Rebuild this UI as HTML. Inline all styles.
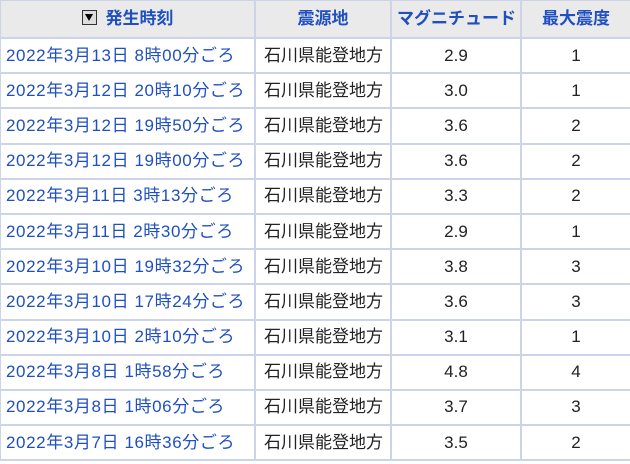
<!DOCTYPE html>
<html><head><meta charset="utf-8"><style>
body{margin:0;background:#fff;font-family:"Liberation Sans","Noto Sans CJK JP",sans-serif;font-size:17px;}
table{border-collapse:collapse;position:absolute;left:-1px;top:-1px;width:633px;table-layout:fixed;}
td,th{border:2px solid #cdd3ea;padding:0 5px;white-space:nowrap;color:#222;line-height:20px;vertical-align:middle;overflow:hidden;}
tr{height:35.2px;}
tr.h{height:38px;}
th{background:#eaeaea;color:#1f4fc0;font-weight:bold;text-align:center;}
td.d{color:#1f4fc0;text-align:left;letter-spacing:0.6px;}
td.m{padding-left:8px;}
td.c{text-align:center;}
.ic{display:inline-block;width:13px;height:13px;border:1px solid #333;background:#ddd;vertical-align:-1px;margin-right:9px;position:relative}
.ic:after{content:"";position:absolute;left:2px;top:3px;border-left:4.5px solid transparent;border-right:4.5px solid transparent;border-top:7px solid #000}
</style></head><body>
<table>
<colgroup><col style="width:255px"><col style="width:136px"><col style="width:130px"><col></colgroup>
<tr class="h"><th><span class="ic"></span>発生時刻</th><th>震源地</th><th>マグニチュード</th><th>最大震度</th></tr>
<tr><td class="d">2022年3月13日 8時00分ごろ</td><td class="m">石川県能登地方</td><td class="c">2.9</td><td class="c">1</td></tr>
<tr><td class="d">2022年3月12日 20時10分ごろ</td><td class="m">石川県能登地方</td><td class="c">3.0</td><td class="c">1</td></tr>
<tr><td class="d">2022年3月12日 19時50分ごろ</td><td class="m">石川県能登地方</td><td class="c">3.6</td><td class="c">2</td></tr>
<tr><td class="d">2022年3月12日 19時00分ごろ</td><td class="m">石川県能登地方</td><td class="c">3.6</td><td class="c">2</td></tr>
<tr><td class="d">2022年3月11日 3時13分ごろ</td><td class="m">石川県能登地方</td><td class="c">3.3</td><td class="c">2</td></tr>
<tr><td class="d">2022年3月11日 2時30分ごろ</td><td class="m">石川県能登地方</td><td class="c">2.9</td><td class="c">1</td></tr>
<tr><td class="d">2022年3月10日 19時32分ごろ</td><td class="m">石川県能登地方</td><td class="c">3.8</td><td class="c">3</td></tr>
<tr><td class="d">2022年3月10日 17時24分ごろ</td><td class="m">石川県能登地方</td><td class="c">3.6</td><td class="c">3</td></tr>
<tr><td class="d">2022年3月10日 2時10分ごろ</td><td class="m">石川県能登地方</td><td class="c">3.1</td><td class="c">1</td></tr>
<tr><td class="d">2022年3月8日 1時58分ごろ</td><td class="m">石川県能登地方</td><td class="c">4.8</td><td class="c">4</td></tr>
<tr><td class="d">2022年3月8日 1時06分ごろ</td><td class="m">石川県能登地方</td><td class="c">3.7</td><td class="c">3</td></tr>
<tr><td class="d">2022年3月7日 16時36分ごろ</td><td class="m">石川県能登地方</td><td class="c">3.5</td><td class="c">2</td></tr>
</table>
</body></html>
